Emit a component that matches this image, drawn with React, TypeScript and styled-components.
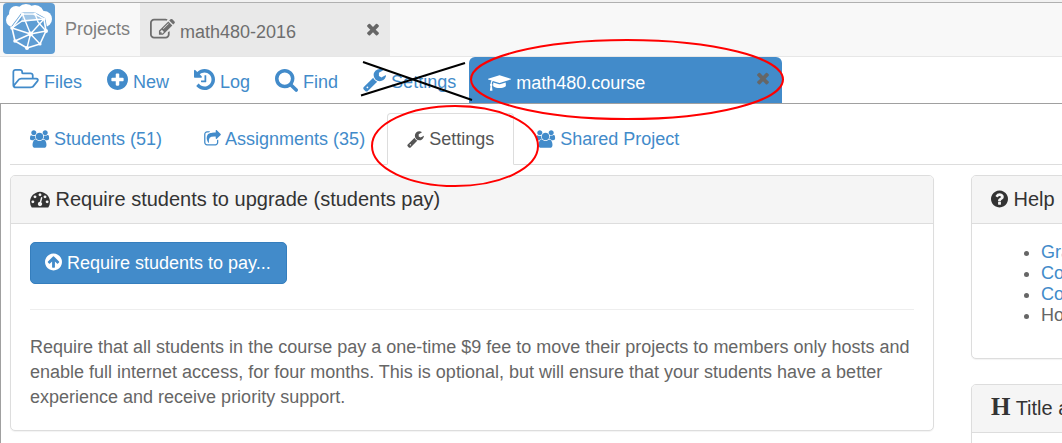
import React from "react";
import styled, { createGlobalStyle, css } from "styled-components";

const blue = "#428bca";
const line = "#dddddd";

const GlobalStyle = createGlobalStyle`
  *, *::before, *::after { box-sizing: border-box; }
  body {
    margin: 0;
    background: #ffffff;
    color: #666666;
    font: 18px/25px "Liberation Sans", Arial, sans-serif;
  }
  a { color: ${blue}; text-decoration: none; }
  button { font: inherit; cursor: pointer; }
`;

/* ---------- icons ---------- */

const disc =
  "q0 209-103 385.5t-279.5 279.5-385.5 103-385.5-103-279.5-279.5-103-385.5 103-385.5 279.5-279.5 385.5-103 385.5 103 279.5 279.5 103 385.5z";

const glyphs = {
  folder: {
    x: 30,
    w: 1960,
    d: "M1845 931q0-35-53-35h-1088q-40 0-85.5 21.5t-71.5 52.5l-294 363q-18 24-18 40 0 35 53 35h1088q40 0 86-22t71-53l294-363q18-22 18-39zm-1141-163h768v-160q0-40-28-68t-68-28h-576q-40 0-68-28t-28-68v-64q0-40-28-68t-68-28h-320q-40 0-68 28t-28 68v853l256-315q44-53 116-87.5t140-34.5zm1269 163q0 62-46 120l-295 363q-43 53-116 87.5t-140 34.5h-1088q-92 0-158-66t-66-158v-960q0-92 66-158t158-66h320q92 0 158 66t66 158v32h544q92 0 158 66t66 158v160h192q54 0 99 24.5t67 70.5q15 32 15 68z",
  },
  plus: {
    x: 128,
    w: 1536,
    d:
      "M1344 960v-128q0-26-19-45t-45-19h-256v-256q0-26-19-45t-45-19h-128q-26 0-45 19t-19 45v256h-256q-26 0-45 19t-19 45v128q0 26 19 45t45 19h256v256q0 26 19 45t45 19h128q26 0 45-19t19-45v-256h256q26 0 45-19t19-45zm320-64" +
      disc,
  },
  history: {
    x: 128,
    w: 1536,
    d: "M1664 896q0 156-61 298t-164 245-245 164-298 61q-172 0-327-72.5t-264-204.5q-7-10-6.5-22.5t8.5-20.5l137-138q10-9 25-9 16 2 23 12 73 95 179 147t225 52q104 0 198.5-40.5t163.5-109.5 109.5-163.5 40.5-198.5-40.5-198.5-109.5-163.5-163.5-109.5-198.5-40.5q-98 0-188 35.5t-160 101.5l137 138q31 30 14 69-17 40-59 40h-448q-26 0-45-19t-19-45v-448q0-42 40-59 39-17 69 14l130 129q107-101 244.5-156.5t284.5-55.5q156 0 298 61t245 164 164 245 61 298zm-640-288v448q0 14-9 23t-23 9h-320q-14 0-23-9t-9-23v-64q0-14 9-23t23-9h224v-352q0-14 9-23t23-9h64q14 0 23 9t9 23z",
  },
  search: {
    x: 64,
    w: 1664,
    d: "M1216 832q0-185-131.5-316.5t-316.5-131.5-316.5 131.5-131.5 316.5 131.5 316.5 316.5 131.5 316.5-131.5 131.5-316.5zm512 832q0 52-38 90t-90 38q-54 0-90-38l-343-342q-179 124-399 124-143 0-273.5-55.5t-225-150-150-225-55.5-273.5 55.5-273.5 150-225 225-150 273.5-55.5 273.5 55.5 225 150 150 225 55.5 273.5q0 220-124 399l343 343q37 37 37 90z",
  },
  wrench: {
    x: 64,
    w: 1664,
    d: "M448 1472q0-26-19-45t-45-19-45 19-19 45 19 45 45 19 45-19 19-45zm644-420l-682 682q-37 37-90 37-52 0-91-37l-106-108q-38-36-38-90 0-53 38-91l681-681q39 98 114.5 173.5t173.5 114.5zm634-435q0 39-23 106-47 134-164.5 217.5t-258.5 83.5q-185 0-316.5-131.5t-131.5-316.5 131.5-316.5 316.5-131.5q58 0 121.5 16.5t107.5 46.5q16 11 16 28t-16 28l-293 169v224l193 107q5-3 79-48.5t135.5-81 70.5-35.5q15 0 23.5 10t8.5 25z",
  },
  cap: {
    x: 0,
    w: 2304,
    d: "M1774 836l18 316q4 69-82 128t-235 93.5-323 34.5-323-34.5-235-93.5-82-128l18-316 574 181q22 7 48 7t48-7zm530-324q0 23-22 31l-1120 352q-4 1-10 1t-10-1l-652-206q-43 34-71 111.5t-34 178.5q63 36 63 109 0 69-58 107l58 433q2 14-8 25-9 11-24 11h-192q-15 0-24-11-10-11-8-25l58-433q-58-38-58-107 0-73 65-111 11-207 98-330l-333-104q-22-8-22-31t22-31l1120-352q4-1 10-1t10 1l1120 352q22 8 22 31z",
  },
  times: {
    x: 192,
    w: 1408,
    d: "M1490 1322q0 40-28 68l-136 136q-28 28-68 28t-68-28l-294-294-294 294q-28 28-68 28t-68-28l-136-136q-28-28-28-68t28-68l294-294-294-294q-28-28-28-68t28-68l136-136q28-28 68-28t68 28l294 294 294-294q28-28 68-28t68 28l136 136q28 28 28 68t-28 68l-294 294 294 294q28 28 28 68z",
  },
  edit: {
    x: 0,
    w: 1792,
    d: "M888 1184l116-116-152-152-116 116v56h96v96h56zm440-720q-16-16-33 1l-350 350q-17 17-1 33t33-1l350-350q17-17 1-33zm80 594v190q0 119-84.5 203.5t-203.5 84.5h-832q-119 0-203.5-84.5t-84.5-203.5v-832q0-119 84.5-203.5t203.5-84.5h832q63 0 117 25 15 7 18 23 3 17-9 29l-49 49q-14 14-32 8-23-6-45-6h-832q-66 0-113 47t-47 113v832q0 66 47 113t113 47h832q66 0 113-47t47-113v-126q0-13 9-22l64-64q15-15 35-7t20 29zm-96-738l288 288-672 672h-288v-288zm444 132l-92 92-288-288 92-92q28-28 68-28t68 28l152 152q28 28 28 68t-28 68z",
  },
  users: {
    x: 0,
    w: 1920,
    d: "M593 896q-162 5-265 128h-134q-82 0-138-40.5t-56-118.5q0-353 124-353 6 0 43.5 21t97.5 42.5 119 21.5q67 0 133-23-5 37-5 66 0 159 93 287zm1071 637q0 120-73 189.5t-194 69.5h-874q-121 0-194-69.5t-73-189.5q0-53 3.5-103.5t14-109 26.5-108.5 43-97.5 62-81 85.5-53.5 111.5-20q10 0 43 21.5t73 48 107 48 135 21.5 135-21.5 107-48 73-48 43-21.5q61 0 111.5 20t85.5 53.5 62 81 43 97.5 26.5 108.5 14 109 3.5 103.5zm-1024-1277q0 106-75 181t-181 75-181-75-75-181 75-181 181-75 181 75 75 181zm704 384q0 159-112.5 271.5t-271.5 112.5-271.5-112.5-112.5-271.5 112.5-271.5 271.5-112.5 271.5 112.5 112.5 271.5zm576 225q0 78-56 118.5t-138 40.5h-134q-103-123-265-128 93-128 93-287 0-29-5-66 66 23 133 23 59 0 119-21.5t97.5-42.5 43.5-21q124 0 124 353zm-128-609q0 106-75 181t-181 75-181-75-75-181 75-181 181-75 181 75 75 181z",
  },
  share: {
    x: 64,
    w: 1664,
    d: "M1472 989v259q0 119-84.5 203.5t-203.5 84.5h-832q-119 0-203.5-84.5t-84.5-203.5v-832q0-119 84.5-203.5t203.5-84.5h255q13 0 22.5 9.5t9.5 22.5q0 27-26 32-77 26-133 60-10 4-16 4h-112q-66 0-113 47t-47 113v832q0 66 47 113t113 47h832q66 0 113-47t47-113v-214q0-19 18-29 28-13 54-37 16-16 35-8 21 9 21 29zm237-496l-384 384q-18 19-45 19-12 0-25-5-39-17-39-59v-192h-160q-323 0-438 131-119 137-74 473 3 23-20 34-8 2-12 2-16 0-26-13-10-14-21-31t-39.5-68.5-49.5-99.5-38.5-114-17.5-122q0-49 3.5-91t14-90 28-88 47-81.5 68.5-74 94.5-61.5 124.5-48.5 159.5-30.5 196.5-11h160v-192q0-42 39-59 13-5 25-5 26 0 45 19l384 384q19 19 19 45t-19 45z",
  },
  gauge: {
    x: 0,
    w: 1792,
    d: "M384 1152q0-53-37.5-90.5t-90.5-37.5-90.5 37.5-37.5 90.5 37.5 90.5 90.5 37.5 90.5-37.5 37.5-90.5zm192-448q0-53-37.5-90.5t-90.5-37.5-90.5 37.5-37.5 90.5 37.5 90.5 90.5 37.5 90.5-37.5 37.5-90.5zm428 481l101-382q6-26-7.5-48.5t-38.5-29.5-48 6.5-30 39.5l-101 382q-60 5-107 43.5t-63 98.5q-20 77 20 146t117 89 146-20 89-117q16-60-6-117t-72-91zm660-33q0-53-37.5-90.5t-90.5-37.5-90.5 37.5-37.5 90.5 37.5 90.5 90.5 37.5 90.5-37.5 37.5-90.5zm-640-640q0-53-37.5-90.5t-90.5-37.5-90.5 37.5-37.5 90.5 37.5 90.5 90.5 37.5 90.5-37.5 37.5-90.5zm448 192q0-53-37.5-90.5t-90.5-37.5-90.5 37.5-37.5 90.5 37.5 90.5 90.5 37.5 90.5-37.5 37.5-90.5zm320 448q0 261-141 483-19 29-54 29h-1402q-35 0-54-29-141-221-141-483 0-182 71-348t191-286 286-191 348-71 348 71 286 191 191 286 71 348z",
  },
  up: {
    x: 128,
    w: 1536,
    d:
      "M1412 895q0-27-18-45l-362-362-91-91q-18-18-45-18t-45 18l-91 91-362 362q-18 18-18 45t18 45l91 91q18 18 45 18t45-18l189-189v502q0 26 19 45t45 19h128q26 0 45-19t19-45v-502l189 189q19 19 45 19t45-19l91-91q18-18 18-45zm252 1" +
      disc,
  },
  question: {
    x: 128,
    w: 1536,
    d:
      "M1024 1376v-192q0-14-9-23t-23-9h-192q-14 0-23 9t-9 23v192q0 14 9 23t23 9h192q14 0 23-9t9-23zm256-672q0-88-55.5-163t-138.5-116-170-41q-243 0-371 213-15 24 8 42l132 100q7 6 19 6 16 0 25-12 53-68 86-92 34-24 86-24 48 0 85.5 26t37.5 59q0 38-20 61t-68 45q-63 28-115.5 86.5t-52.5 125.5v36q0 14 9 23t23 9h192q14 0 23-9t9-23q0-19 21.5-49.5t54.5-49.5q32-18 49-28.5t46-35 44.5-48 28-60.5 12.5-81zm384 192" +
      disc,
  },
};

type GlyphName = keyof typeof glyphs;

const Glyph = styled.svg<{ $size: number }>`
  height: ${(p) => p.$size}px;
  width: auto;
  fill: currentColor;
  overflow: visible;
  vertical-align: ${(p) => (p.$size > 20 ? -4 : -3)}px;
`;

function Icon({ name, size = 18 }: { name: GlyphName; size?: number }) {
  const g = glyphs[name];
  return (
    <Glyph
      $size={size}
      viewBox={`${g.x} 0 ${g.w} 1792`}
      width={Math.round((g.w * size) / 1792)}
      height={size}
      aria-hidden="true"
    >
      <path d={g.d} />
    </Glyph>
  );
}

const LogoSvg = styled.svg`
  display: block;
  width: 52px;
  height: 51px;
`;

function Logo() {
  return (
    <LogoSvg viewBox="0 0 52 51" role="img" aria-label="Home">
      <rect width="52" height="51" rx="4" fill="#5e9dd4" />
      <g fill="#fff">
        <circle cx="23" cy="11" r="10" />
        <circle cx="13" cy="10" r="7" />
        <circle cx="10" cy="17" r="7" />
        <circle cx="32" cy="11" r="9" />
        <circle cx="41" cy="16" r="8" />
        <path d="M10 14h30v10H10z" />
      </g>
      <path
        d="M19.5 11L32 11L41 16L43 28L37 41L24 45L12 38L9 25Z"
        fill="#5e9dd4"
        stroke="#5e9dd4"
        strokeWidth="3"
        strokeLinejoin="round"
      />
      <path d="M19.5 11L32 11L39 17L18 19Z" fill="#fff" fillOpacity="0.4" />
      <g fill="none" stroke="#fff" strokeLinejoin="round">
        <path
          d="M19.5 11L32 11L41 16L43 28L37 41L24 45L12 38L9 25Z"
          strokeWidth="1.6"
        />
        <path
          d="M19.500 11L27.500 31L41 16M9 25L27.500 31L43 28M12 38L27.500 31L24 45M27.500 31L37 41M9 25L19 18L41 16M32 11L35 19L43 28"
          strokeWidth="1.4"
        />
      </g>
      <g fill="#fff">
        <circle cx="19.5" cy="11" r="1.6" />
        <circle cx="32" cy="11" r="1.6" />
        <circle cx="41" cy="16" r="1.6" />
        <circle cx="43" cy="28" r="2" />
        <circle cx="37" cy="41" r="1.6" />
        <circle cx="24" cy="45" r="2" />
        <circle cx="12" cy="38" r="1.8" />
        <circle cx="9" cy="25" r="1.8" />
        <circle cx="27.5" cy="31" r="2.4" />
      </g>
    </LogoSvg>
  );
}

/* ---------- top bar ---------- */

const Shell = styled.div`
  position: relative;
  display: flex;
  flex-direction: column;
  height: 100vh;
  overflow: hidden;
  border-top: 2px solid #f2f2f2;
`;

const TopBar = styled.header`
  display: flex;
  flex: none;
  height: 55px;
  border-top: 1px solid #b0b0b0;
  border-bottom: 1px solid #e7e7e7;
  background: #f8f8f8;
`;

const HomeLink = styled.a`
  padding-left: 3px;
`;

const ProjectsLink = styled.a`
  padding: 14px 10px 0;
  color: #808080;
`;

const ProjectTab = styled.div`
  display: flex;
  justify-content: space-between;
  width: 250px;
  padding: 14px 10px 0;
  background: #e9e9e9;
  color: #6e6e6e;
`;

const CloseButton = styled.button`
  align-self: flex-start;
  padding: 0;
  border: 0;
  background: none;
  color: #666666;
`;

/* ---------- project toolbar ---------- */

const Toolbar = styled.nav`
  display: flex;
  flex: none;
  gap: 1px;
  height: 47px;
  border-bottom: 1px solid #a0a0a0;
`;

const ToolLink = styled.a`
  padding: 10px 12px 0;
  white-space: nowrap;
`;

const FileTab = styled.div`
  display: flex;
  justify-content: space-between;
  width: 313px;
  padding: 9px 12px 0 19px;
  border-radius: 6px 6px 0 0;
  background: ${blue};
  color: #ffffff;
`;

const FileName = styled.span`
  padding-top: 5px;
`;

/* ---------- course page ---------- */

const Page = styled.main`
  flex: 1;
  padding: 9px 0 0 9px;
  border-left: 1px solid #a0a0a0;
`;

const CourseTabs = styled.nav`
  display: flex;
  gap: 2px;
  height: 52px;
  border-bottom: 1px solid ${line};
`;

const CourseTab = styled.a<{ $active?: boolean }>`
  height: 52px;
  padding: 13px 19px 0;
  border: 1px solid transparent;
  white-space: nowrap;
  ${(p) =>
    p.$active &&
    css`
      border-color: ${line};
      border-bottom-color: #ffffff;
      border-radius: 4px 4px 0 0;
      background: #ffffff;
      color: #555555;
    `}
`;

const Columns = styled.div`
  display: grid;
  grid-template-columns: calc(100% - 128px) 44%;
  align-items: start;
  gap: 37px;
  margin-top: 10px;
`;

const Side = styled.aside`
  display: grid;
  gap: 25px;
`;

const Panel = styled.section`
  border: 1px solid ${line};
  border-radius: 5px;
  background: #ffffff;
  box-shadow: 0 1px 1px rgba(0, 0, 0, 0.05);
`;

const PanelTitle = styled.h2`
  height: 48px;
  margin: 0;
  padding: 10px 19px;
  border-bottom: 1px solid ${line};
  border-radius: 4px 4px 0 0;
  background: #f5f5f5;
  color: #333333;
  font-size: 20px;
  font-weight: 400;
  line-height: 26px;
  white-space: nowrap;
`;

const PanelBody = styled.div`
  padding: 18px 19px 20px;
`;

const PayButton = styled.button`
  height: 42px;
  padding: 0 15px 0 14px;
  border: 1px solid #357ebd;
  border-radius: 5px;
  background: ${blue};
  color: #ffffff;
`;

const Divider = styled.hr`
  margin: 25px 0;
  border: 0;
  border-top: 1px solid #eeeeee;
`;

const Text = styled.p`
  margin: 0;
`;

const HelpList = styled.ul`
  margin: 0 0 12px;
  padding-left: 50px;
  line-height: 21px;
`;

const SerifMark = styled.span`
  font-family: "Liberation Serif", serif;
  font-size: 25px;
  font-weight: 700;
  line-height: 20px;
`;

/* Hand-drawn markup lying over the page */
const Markup = styled.svg`
  position: absolute;
  top: -2px;
  left: 0;
  width: 800px;
  height: 200px;
  fill: none;
  stroke-width: 2;
  pointer-events: none;
`;

export default function App() {
  return (
    <>
      <GlobalStyle />
      <Shell>
        <TopBar>
          <HomeLink href="#home">
            <Logo />
          </HomeLink>
          <ProjectsLink href="#projects">Projects</ProjectsLink>
          <ProjectTab>
            <span>
              <Icon name="edit" size={25} /> math480-2016
            </span>
            <CloseButton aria-label="Close project">
              <Icon name="times" />
            </CloseButton>
          </ProjectTab>
        </TopBar>

        <Toolbar>
          <ToolLink href="#files">
            <Icon name="folder" size={25} /> Files
          </ToolLink>
          <ToolLink href="#new">
            <Icon name="plus" size={25} /> New
          </ToolLink>
          <ToolLink href="#log">
            <Icon name="history" size={25} /> Log
          </ToolLink>
          <ToolLink href="#find">
            <Icon name="search" size={25} /> Find
          </ToolLink>
          <ToolLink href="#settings">
            <Icon name="wrench" size={25} /> Settings
          </ToolLink>
          <FileTab>
            <FileName>
              <Icon name="cap" /> math480.course
            </FileName>
            <CloseButton aria-label="Close file">
              <Icon name="times" />
            </CloseButton>
          </FileTab>
        </Toolbar>

        <Page>
          <CourseTabs>
            <CourseTab href="#students">
              <Icon name="users" /> Students (51)
            </CourseTab>
            <CourseTab href="#assignments">
              <Icon name="share" /> Assignments (35)
            </CourseTab>
            <CourseTab href="#course-settings" $active aria-current="page">
              <Icon name="wrench" /> Settings
            </CourseTab>
            <CourseTab href="#shared">
              <Icon name="users" /> Shared Project
            </CourseTab>
          </CourseTabs>

          <Columns>
            <Panel>
              <PanelTitle>
                <Icon name="gauge" size={20} /> Require students to upgrade
                (students pay)
              </PanelTitle>
              <PanelBody>
                <PayButton>
                  <Icon name="up" size={20} /> Require students to pay...
                </PayButton>
                <Divider />
                <Text>
                  Require that all students in the course pay a one-time $9 fee
                  to move their projects to members only hosts and enable full
                  internet access, for four months. This is optional, but will
                  ensure that your students have a better experience and receive
                  priority support.
                </Text>
              </PanelBody>
            </Panel>

            <Side>
              <Panel>
                <PanelTitle>
                  <Icon name="question" size={20} /> Help
                </PanelTitle>
                <PanelBody>
                  <HelpList>
                    <li>
                      <a href="#help-1">Gra</a>
                    </li>
                    <li>
                      <a href="#help-2">Co</a>
                    </li>
                    <li>
                      <a href="#help-3">Co</a>
                    </li>
                    <li>Ho</li>
                  </HelpList>
                </PanelBody>
              </Panel>
              <Panel>
                <PanelTitle>
                  <SerifMark aria-hidden="true">H</SerifMark> Title a
                </PanelTitle>
                <PanelBody />
              </Panel>
            </Side>
          </Columns>
        </Page>

        <Markup viewBox="0 0 800 200" aria-hidden="true">
          <g stroke="#000000">
            <path d="M363 62L472 100" />
            <path d="M361 95.5L465 63" />
          </g>
          <g stroke="#ff0000">
            <ellipse cx="627" cy="79.5" rx="156" ry="39.5" />
            <ellipse cx="455" cy="146" rx="83" ry="40" />
          </g>
        </Markup>
      </Shell>
    </>
  );
}
